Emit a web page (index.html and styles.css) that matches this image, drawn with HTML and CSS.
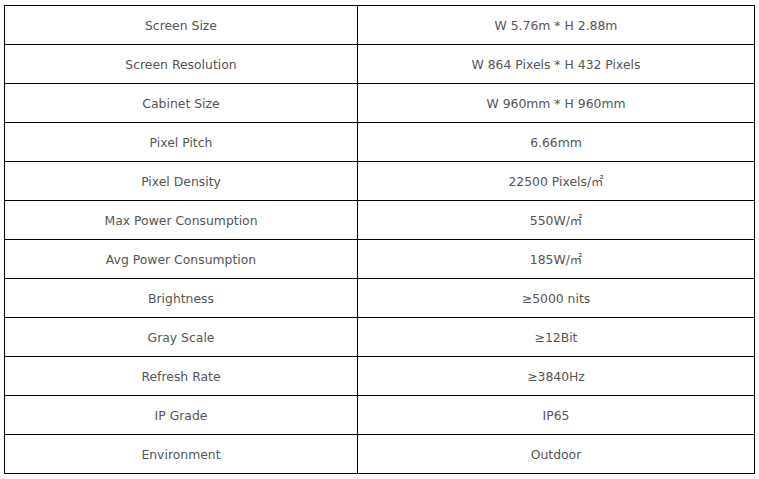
FILE: index.html
```html
<!DOCTYPE html>
<html>
<head>
<meta charset="utf-8">
<link rel="stylesheet" href="styles.css">
</head>
<body>
<table class="spec">
  <colgroup><col class="c1"><col class="c2"></colgroup>
  <tbody>
    <tr><td>Screen Size</td><td>W 5.76m * H 2.88m</td></tr>
    <tr><td>Screen Resolution</td><td>W 864 Pixels * H 432 Pixels</td></tr>
    <tr><td>Cabinet Size</td><td>W 960mm * H 960mm</td></tr>
    <tr><td>Pixel Pitch</td><td>6.66mm</td></tr>
    <tr><td>Pixel Density</td><td>22500 Pixels/㎡</td></tr>
    <tr><td>Max Power Consumption</td><td>550W/㎡</td></tr>
    <tr><td>Avg Power Consumption</td><td>185W/㎡</td></tr>
    <tr><td>Brightness</td><td>≥5000 nits</td></tr>
    <tr><td>Gray Scale</td><td>≥12Bit</td></tr>
    <tr><td>Refresh Rate</td><td>≥3840Hz</td></tr>
    <tr><td>IP Grade</td><td>IP65</td></tr>
    <tr><td>Environment</td><td>Outdoor</td></tr>
  </tbody>
</table>
</body>
</html>
```
FILE: styles.css
```css
html, body {
  margin: 0;
  background: #fff;
}
body {
  padding: 5px 0 0 4px;
  font-family: "DejaVu Sans", "Noto Sans CJK SC", sans-serif;
  font-size: 12.4px;
  color: #555;
}
.spec {
  border-collapse: collapse;
  table-layout: fixed;
  width: 750px;
}
.spec .c1 { width: 353px; }
.spec .c2 { width: 397px; }
.spec td {
  border: 1px solid #000;
  padding: 2px 0 0;
  height: 36px;
  line-height: 36px;
  text-align: center;
  white-space: nowrap;
}
```
